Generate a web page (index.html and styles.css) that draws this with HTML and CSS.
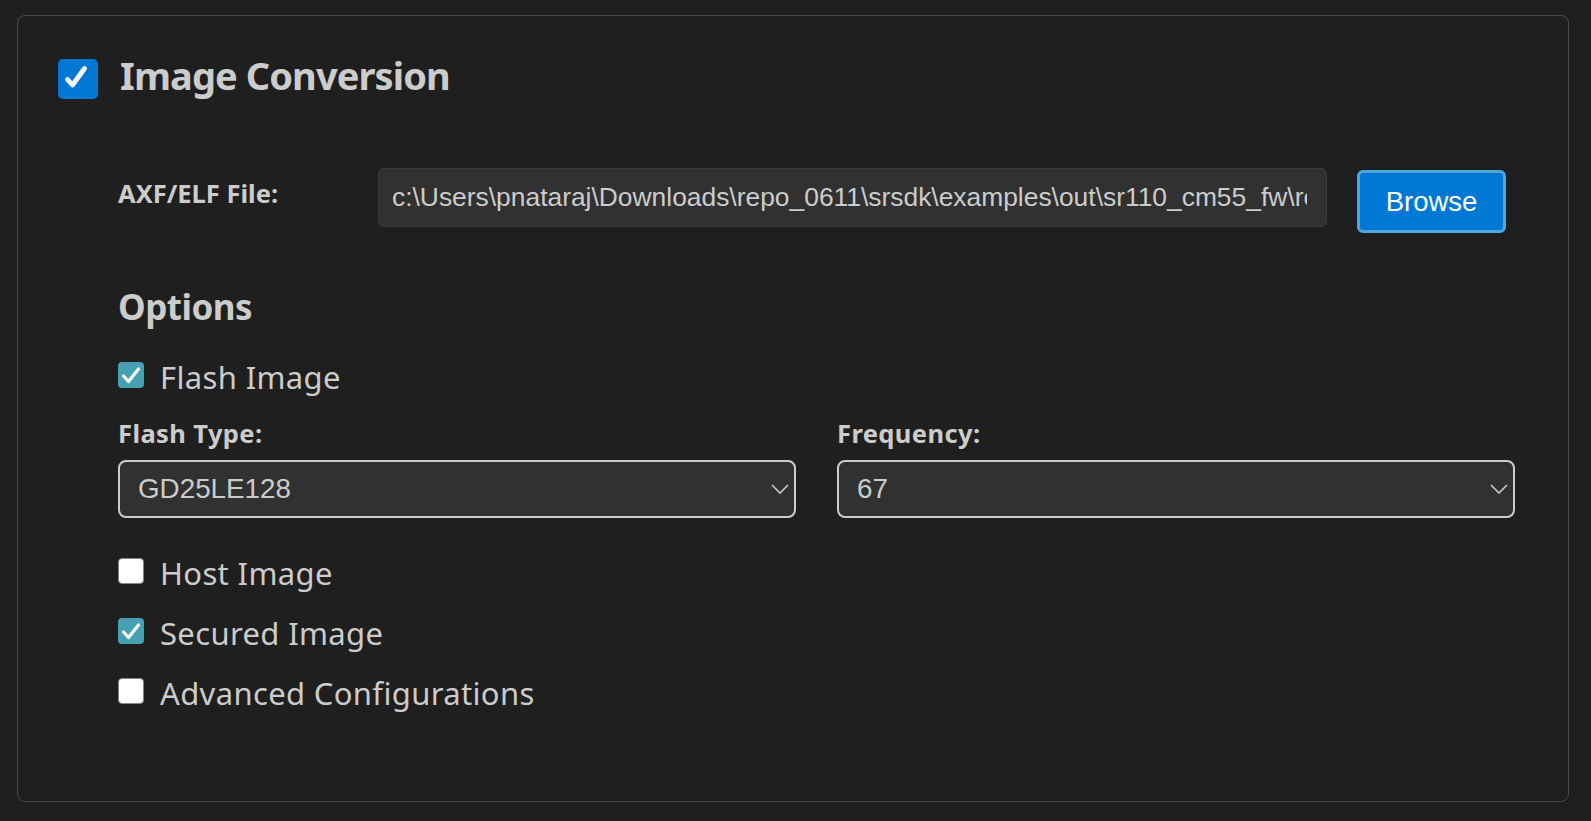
FILE: index.html
```html
<!DOCTYPE html>
<html lang="en">
<head>
<meta charset="utf-8">
<title>Image Conversion</title>
<link rel="stylesheet" href="styles.css">
</head>
<body>
<div class="panel">
  <div class="header">
    <span class="cb cb-main">
      <svg width="40" height="40" viewBox="0 0 40 40"><path d="M9.5 20.5 L14.5 26 L26.5 9.5" fill="none" stroke="#ffffff" stroke-width="4.8" stroke-linecap="round" stroke-linejoin="round"/></svg>
    </span>
    <h2 class="title">Image Conversion</h2>
  </div>
  <div class="content">
    <div class="file-row">
      <label class="file-label" for="axf">AXF/ELF File:</label>
      <input id="axf" class="file-input" type="text" readonly value="c:\Users\pnataraj\Downloads\repo_0611\srsdk\examples\out\sr110_cm55_fw\release\bin\sr110_cm55_fw.axf">
      <button class="browse">Browse</button>
    </div>
    <h3 class="options-title">Options</h3>
    <div class="check-row first">
      <span class="cb cb-on"><svg width="26" height="26" viewBox="0 0 26 26"><path d="M5.5 14 L10.5 19.5 L20.5 7" fill="none" stroke="#ffffff" stroke-width="3.2" stroke-linecap="round" stroke-linejoin="round"/></svg></span>
      <span class="check-text">Flash Image</span>
    </div>
    <div class="selects">
      <div class="field">
        <div class="field-label">Flash Type:</div>
        <div class="select"><span>GD25LE128</span><svg class="chev" width="18" height="10" viewBox="0 0 18 10"><path d="M1 1 L9 9 L17 1" fill="none" stroke="#cccccc" stroke-width="1.6"/></svg></div>
      </div>
      <div class="field">
        <div class="field-label">Frequency:</div>
        <div class="select"><span>67</span><svg class="chev" width="18" height="10" viewBox="0 0 18 10"><path d="M1 1 L9 9 L17 1" fill="none" stroke="#cccccc" stroke-width="1.6"/></svg></div>
      </div>
    </div>
    <div class="check-list">
      <div class="check-row">
        <span class="cb cb-off"></span>
        <span class="check-text">Host Image</span>
      </div>
      <div class="check-row">
        <span class="cb cb-on"><svg width="26" height="26" viewBox="0 0 26 26"><path d="M5.5 14 L10.5 19.5 L20.5 7" fill="none" stroke="#ffffff" stroke-width="3.2" stroke-linecap="round" stroke-linejoin="round"/></svg></span>
        <span class="check-text">Secured Image</span>
      </div>
      <div class="check-row">
        <span class="cb cb-off"></span>
        <span class="check-text">Advanced Configurations</span>
      </div>
    </div>
  </div>
</div>
</body>
</html>
```
FILE: styles.css
```css
html, body {
  background: #1f1f1f;
}
body {
  margin: 0;
  padding: 15px 22px 0 17px;
  font-family: "Noto Sans", "Open Sans", sans-serif;
  color: #cccccc;
}
.panel {
  height: 787px;
  box-sizing: border-box;
  border: 1px solid #4a4a4a;
  border-radius: 8px;
  padding: 39px 0 0 40px;
}
.header {
  display: flex;
  align-items: flex-start;
  gap: 22px;
}
.cb {
  flex: none;
  display: block;
  box-sizing: border-box;
}
.cb svg { display: block; }
.cb-main {
  width: 40px;
  height: 40px;
  margin-top: 4px;
  background: #0078d4;
  border-radius: 5px;
}
.title {
  margin: 0;
  font-size: 38px;
  line-height: 40px;
  font-weight: 700;
  letter-spacing: -0.9px;
  color: #cccccc;
}
.content {
  margin-left: 60px;
  margin-top: 69px;
}
.file-row {
  display: flex;
  align-items: flex-start;
}
.file-label {
  flex: none;
  width: 260px;
  font-size: 25.5px;
  line-height: 50px;
  font-weight: 700;
  letter-spacing: 0px;
}
.file-input {
  flex: none;
  width: 949px;
  height: 59px;
  box-sizing: border-box;
  margin: 0 30px 0 0;
  padding: 0 19px 0 13px;
  background: #313131;
  border: 1px solid #3c3c3c;
  border-radius: 6px;
  font-family: "Liberation Sans", Arial, sans-serif;
  font-size: 26.4px;
  color: #cccccc;
  outline: none;
}
.browse {
  flex: none;
  width: 149px;
  height: 63px;
  margin-top: 2px;
  box-sizing: border-box;
  background: #0078d4;
  border: 3px solid #4ea7dc;
  border-radius: 6px;
  color: #ffffff;
  font-family: "Liberation Sans", Arial, sans-serif;
  font-size: 27.5px;
  padding: 0;
}
.options-title {
  margin: 52px 0 0;
  font-size: 35px;
  line-height: 44px;
  font-weight: 700;
  letter-spacing: -0.5px;
}
.check-row {
  display: flex;
  align-items: flex-start;
  gap: 16px;
  height: 40px;
  font-size: 31px;
  line-height: 40px;
  letter-spacing: 0.35px;
}
.check-row.first {
  margin-top: 28px;
}
.check-row .cb {
  width: 26px;
  height: 26px;
  margin-top: 5px;
  border-radius: 4px;
}
.cb-on {
  background: #45a0b2;
}
.cb-off {
  background: #ffffff;
  border: 1px solid #858585;
}
.selects {
  display: grid;
  grid-template-columns: 678px 678px;
  column-gap: 41px;
  margin-top: 20px;
}
.field-label {
  font-size: 25.5px;
  line-height: 32px;
  font-weight: 700;
  letter-spacing: 0.4px;
  margin-bottom: 11px;
}
.select {
  height: 58px;
  box-sizing: border-box;
  display: flex;
  align-items: center;
  justify-content: space-between;
  padding: 0 5px 0 18px;
  background: #313131;
  border: 2px solid #cccccc;
  border-radius: 8px;
  font-family: "Liberation Sans", Arial, sans-serif;
  font-size: 27.8px;
  color: #cccccc;
}
.chev { display: block; }
.check-list {
  margin-top: 35px;
  display: flex;
  flex-direction: column;
  gap: 20px;
}
```
